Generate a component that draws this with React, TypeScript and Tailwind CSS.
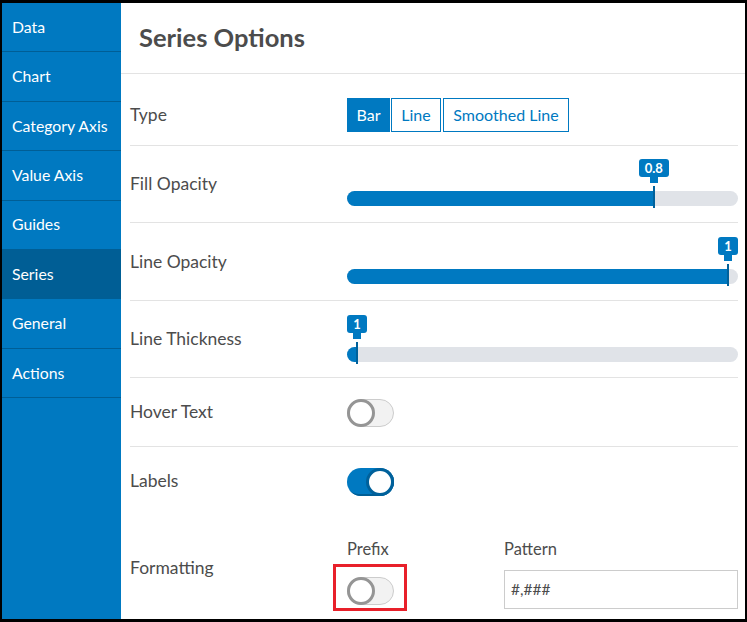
import React from 'react'

const NAV = ['Data', 'Chart', 'Category Axis', 'Value Axis', 'Guides', 'Series', 'General', 'Actions']

function Slider({ pos, label, boxW }: { pos: number; label: string; boxW: string }) {
  // thumb travels from 10px to (100% - 10px)
  const left = `calc(10px + ${pos} * (100% - 20px))`
  return (
    <div className="relative pt-[32px]">
      <div className="relative h-[15px] rounded-full bg-[#e0e3e8] overflow-hidden">
        <div className="h-full bg-[#0079c1]" style={{ width: left }} />
      </div>
      <div className="absolute top-0 -translate-x-1/2 flex flex-col items-center" style={{ left }}>
        <div
          className={`h-[18px] ${boxW} rounded-[3px] bg-[#0079c1] text-white text-[13px] font-bold leading-[18px] text-center`}
        >
          {label}
        </div>
        <div className="w-[8px] h-[6px] bg-[#0079c1]" />
      </div>
      <div className="absolute top-[27px] w-[2px] h-[22px] -translate-x-1/2 bg-[#00619b]" style={{ left }} />
    </div>
  )
}

function Toggle({ on }: { on: boolean }) {
  return on ? (
    <div className="relative w-[47px] h-[28px] rounded-full bg-[#0079c1] shadow-[inset_-2px_-2px_0_#005e95]">
      <div className="absolute right-0 top-0 w-[28px] h-[28px] rounded-full bg-white border-[3px] border-[#00619b]" />
    </div>
  ) : (
    <div className="relative w-[47px] h-[28px] rounded-full bg-[#f2f2f2] border border-[#cccccc]">
      <div className="absolute -left-px -top-px w-[28px] h-[28px] rounded-full bg-white border-[3px] border-[#959595]" />
    </div>
  )
}

function Label({ children }: { children: React.ReactNode }) {
  return <div className="w-[217px] shrink-0 text-[17.5px] text-[#4c4c4c] leading-6">{children}</div>
}

export default function App() {
  return (
    <div
      className="w-[747px] h-[622px] bg-black pt-[3px] pl-[2px] pr-[2px] pb-[3px] overflow-hidden"
      style={{ fontFamily: 'Lato, "Noto Sans", sans-serif' }}
    >
      <div className="flex h-full bg-white">
        {/* side nav */}
        <div className="w-[119px] shrink-0 bg-[#0079c1]">
          {NAV.map((item) => (
            <div
              key={item}
              className={`h-[49.4px] flex items-center pl-[10px] pb-[1px] text-[15.8px] text-white border-b border-[#005e95] ${
                item === 'Series' ? 'bg-[#005e95]' : ''
              }`}
            >
              {item}
            </div>
          ))}
        </div>

        {/* main */}
        <div className="flex-1 flex flex-col">
          <div className="h-[71px] shrink-0 flex items-center pl-[18px] pb-[1px] border-b border-[#e3e3e3]">
            <h1 className="text-[25.5px] font-bold text-[#4c4c4c]">Series Options</h1>
          </div>

          <div className="pl-[9px] pr-[7px] flex flex-col">
            {/* Type */}
            <div className="h-[72px] flex items-center pt-[10px] border-b border-[#e3e3e3]">
              <Label>Type</Label>
              <div className="flex gap-px text-[16px] leading-none text-[#0079c1]">
                <button className="h-[34px] w-[43px] bg-[#0079c1] text-white">Bar</button>
                <button className="h-[34px] w-[50px] border border-[#0079c1]">Line</button>
                <button className="h-[34px] w-[126px] border border-[#0079c1] ml-px">Smoothed Line</button>
              </div>
            </div>

            {/* Fill Opacity */}
            <div className="h-[77px] flex items-center border-b border-[#e3e3e3]">
              <Label>Fill Opacity</Label>
              <div className="flex-1 self-start mt-[13px]">
                <Slider pos={0.8} label="0.8" boxW="w-[30px]" />
              </div>
            </div>

            {/* Line Opacity */}
            <div className="h-[78px] flex items-center border-b border-[#e3e3e3]">
              <Label>Line Opacity</Label>
              <div className="flex-1 self-start mt-[14px]">
                <Slider pos={1} label="1" boxW="w-[20px]" />
              </div>
            </div>

            {/* Line Thickness */}
            <div className="h-[77px] flex items-center border-b border-[#e3e3e3]">
              <Label>Line Thickness</Label>
              <div className="flex-1 self-start mt-[14px]">
                <Slider pos={0} label="1" boxW="w-[20px]" />
              </div>
            </div>

            {/* Hover Text */}
            <div className="h-[69px] flex items-center border-b border-[#e3e3e3]">
              <Label>Hover Text</Label>
              <div className="pt-[2px]">
                <Toggle on={false} />
              </div>
            </div>

            {/* Labels */}
            <div className="h-[67px] flex items-center">
              <Label>Labels</Label>
              <div className="pt-[2px]">
                <Toggle on />
              </div>
            </div>

            {/* Formatting */}
            <div className="flex">
              <div className="pt-[42px]">
                <Label>Formatting</Label>
              </div>
              <div className="flex pt-[25px]">
                <div className="w-[157px] shrink-0">
                  <div className="h-[20px] text-[16.5px] leading-5 text-[#4c4c4c]">Prefix</div>
                  <div className="relative mt-[18px] w-[47px]">
                    <Toggle on={false} />
                    <div className="absolute left-[-14px] top-[-13px] w-[74px] h-[47px] border-[3px] border-[#e8202a]" />
                  </div>
                </div>
                <div className="w-[234px]">
                  <div className="h-[20px] text-[16.5px] leading-5 text-[#4c4c4c]">Pattern</div>
                  <div className="mt-[11px] h-[39px] border border-[#cccccc] flex items-center pl-[6px] text-[15.5px] text-[#4c4c4c]">
                    #,###
                  </div>
                </div>
              </div>
            </div>
          </div>
        </div>
      </div>
    </div>
  )
}
